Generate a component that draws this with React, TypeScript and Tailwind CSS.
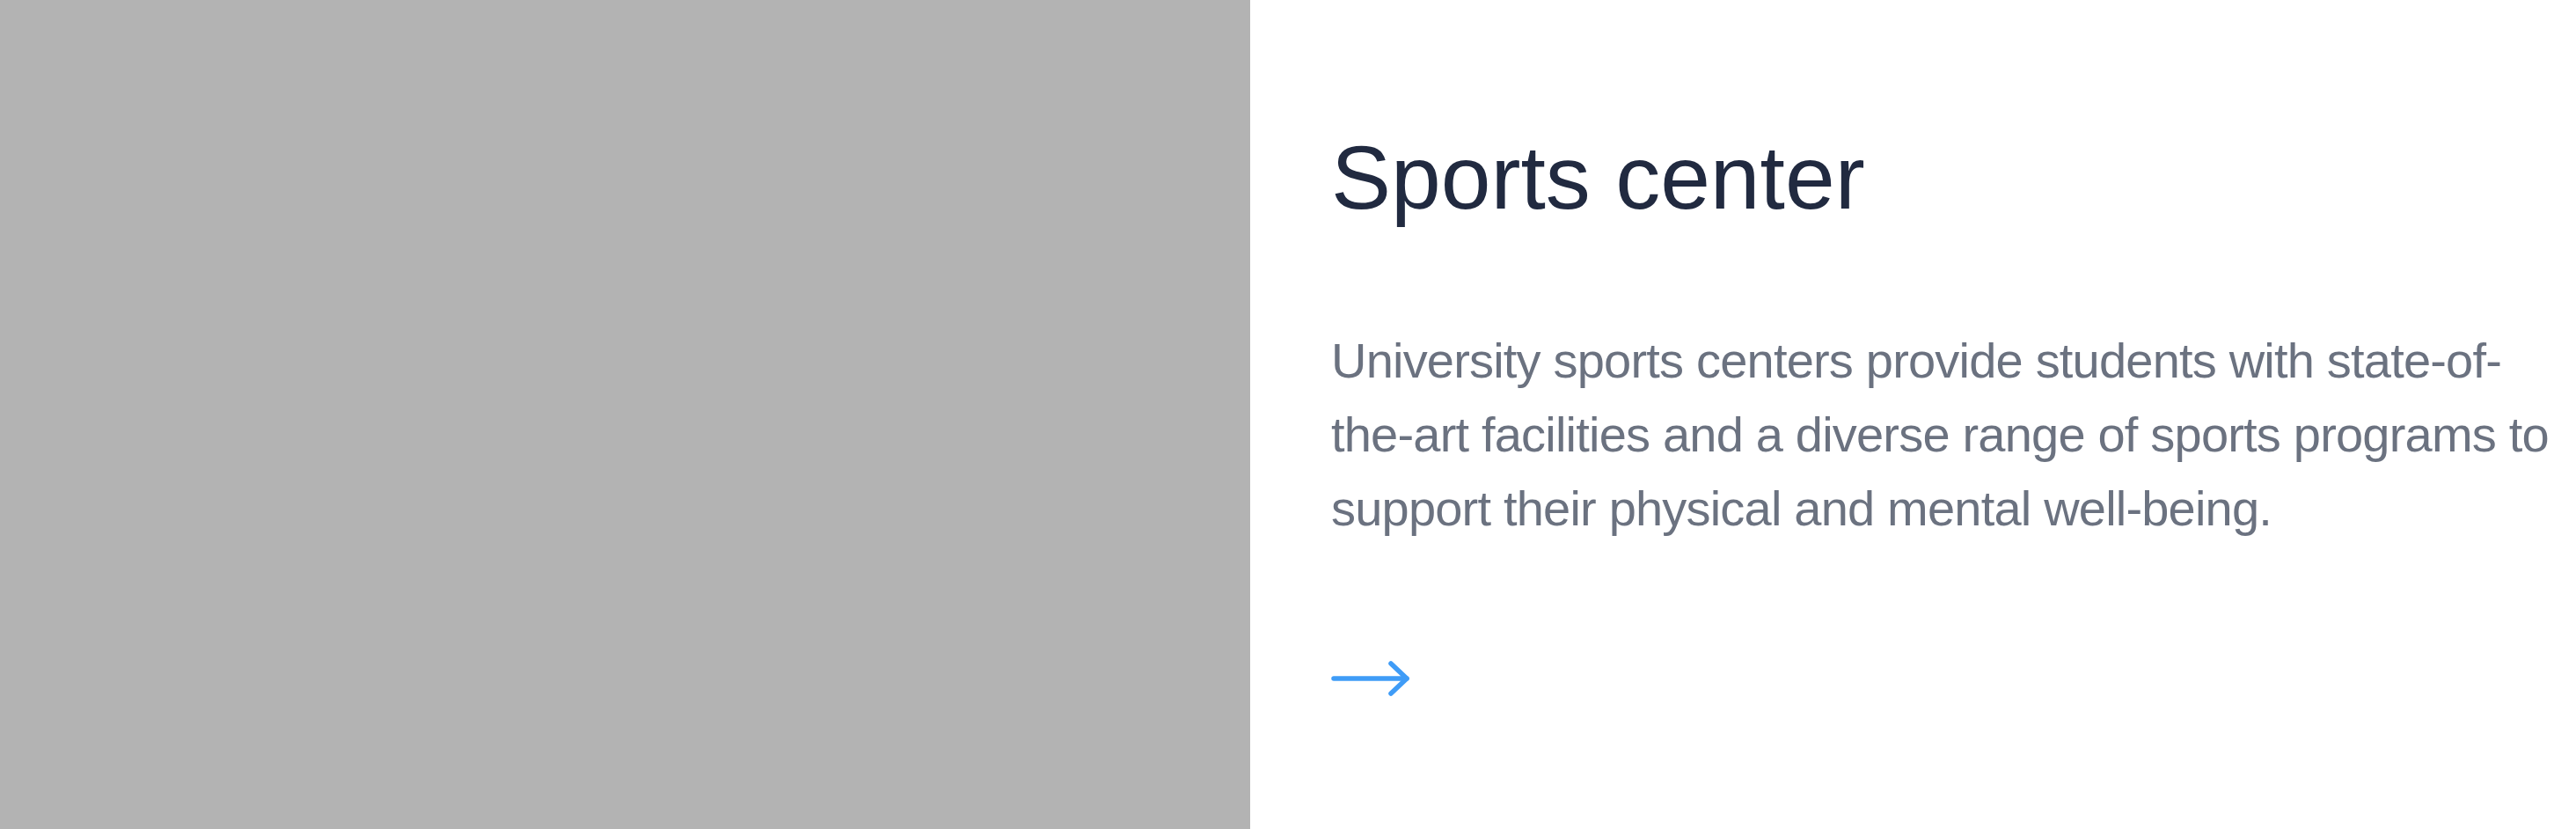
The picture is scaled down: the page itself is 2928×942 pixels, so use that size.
export default function App() {
  return (
    <div className="flex h-[942px] w-full bg-white" style={{ fontFamily: '"Liberation Sans", Arial, sans-serif' }}>
      {/* image placeholder */}
      <div className="h-full w-[1421px] shrink-0 bg-[#b3b3b3]" />

      <div className="flex-1 pl-[92px] pt-[151px]">
        <h2 className="text-[102px] leading-none text-[#212a40]">Sports center</h2>
        <p className="mt-[115px] w-[1420px] text-[56px] leading-[84px] tracking-[-0.8px] text-[#6b7280]">
          University sports centers provide students with state-of-the-art facilities and a diverse range of sports programs to support their physical and mental well-being.
        </p>
        <a href="#" className="mt-[129px] block w-[92px]">
          <svg width="92" height="44" viewBox="0 0 92 44" fill="none" stroke="#3f9cf7" strokeWidth="5.5" strokeLinecap="round" strokeLinejoin="round">
            <path d="M3 22H86" />
            <path d="M68 5L86 22L68 39" />
          </svg>
        </a>
      </div>
    </div>
  );
}
